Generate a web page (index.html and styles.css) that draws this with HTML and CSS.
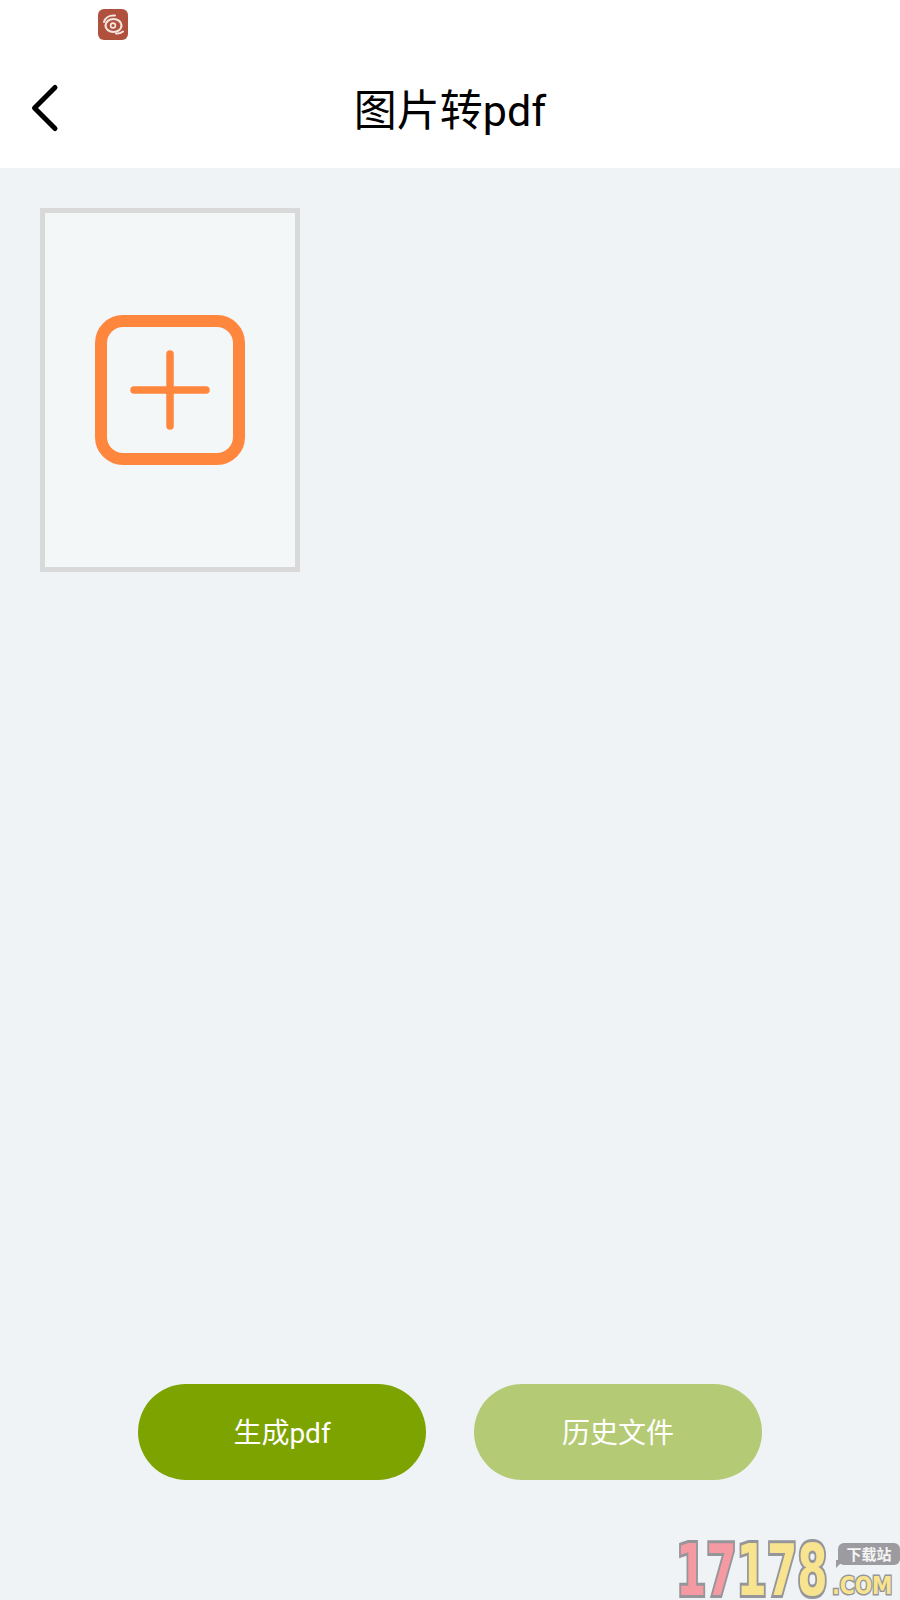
FILE: index.html
```html
<!DOCTYPE html>
<html lang="zh-CN">
<head>
  <meta charset="UTF-8">
  <meta name="viewport" content="width=device-width, initial-scale=1.0">
  <title>图片转pdf</title>
  <link rel="stylesheet" href="styles.css">
</head>
<body>
  <div class="page">
    <!-- Status bar -->
    <div class="status-bar">
      <svg class="app-icon" viewBox="0 0 30 31" width="30" height="31">
        <rect width="30" height="31" rx="6" fill="#b0513d"/>
        <ellipse cx="15.500" cy="16.500" rx="8" ry="6.500" fill="none" stroke="#f6e6e0" stroke-width="2.200"/>
        <circle cx="15" cy="16.500" r="2.400" fill="none" stroke="#f6e6e0" stroke-width="1.600"/>
        <path d="M6 13c1-4 5-7 11-6.500M18 24.500c3 .5 5-.5 7-2" fill="none" stroke="#f6e6e0" stroke-width="2" stroke-linecap="round"/>
      </svg>
    </div>

    <!-- Header -->
    <div class="header">
      <svg class="back-icon" viewBox="0 0 30 50" width="30" height="50">
        <path d="M26 4.500 5.500 25 26 45.500" fill="none" stroke="#000" stroke-width="5" stroke-linecap="round" stroke-linejoin="round"/>
      </svg>
      <h1>图片转pdf</h1>
    </div>

    <!-- Picture list -->
    <div class="content">
      <div class="add-card">
        <svg viewBox="0 0 150 150" width="150" height="150">
          <rect x="6" y="6" width="138" height="138" rx="22" fill="none" stroke="#ff863d" stroke-width="12"/>
          <path d="M39 75h72M75 39v72" fill="none" stroke="#ff863d" stroke-width="7.500" stroke-linecap="round"/>
        </svg>
      </div>
    </div>

    <!-- Buttons -->
    <div class="actions">
      <button class="btn btn-primary">生成pdf</button>
      <button class="btn btn-light">历史文件</button>
    </div>

    <!-- Watermark -->
    <div class="watermark">
      <div class="wm-digits"><span class="wm-pink">17</span><span class="wm-yellow">178</span></div>
      <div class="wm-side">
        <div class="wm-badge">下载站</div>
        <div class="wm-com">.COM</div>
      </div>
    </div>
  </div>
</body>
</html>
```

FILE: styles.css
```css
body {
  margin: 0;
  font-family: Roboto, "Noto Sans CJK SC", sans-serif;
  background: #eff3f6;
}
.page {
  position: relative;
  height: 1600px;
  overflow: hidden;
  display: flex;
  flex-direction: column;
}
.status-bar {
  height: 60px;
  padding: 9px 0 0 98px;
  box-sizing: border-box;
  background: #fff;
}
.app-icon {
  display: block;
}
.header {
  position: relative;
  height: 108px;
  background: #fff;
  display: flex;
  align-items: center;
  justify-content: center;
  padding-bottom: 6px;
  box-sizing: border-box;
}
.header h1 {
  margin: 0;
  font-size: 43px;
  font-weight: 400;
  line-height: 60px;
  color: #000;
}
.back-icon {
  position: absolute;
  left: 29px;
  top: 23px;
}
.content {
  flex: 1;
  padding: 40px;
}
.add-card {
  width: 260px;
  height: 364px;
  box-sizing: border-box;
  border: 5px solid #d9d9d9;
  background: #f4f7f8;
  display: flex;
  align-items: center;
  justify-content: center;
}
.add-card svg {
  display: block;
}
.actions {
  display: flex;
  gap: 48px;
  padding: 0 138px 120px;
}
.btn {
  width: 288px;
  height: 96px;
  border: none;
  border-radius: 48px;
  padding: 0 0 2px;
  color: #fff;
  font-family: inherit;
  font-size: 28px;
}
.btn-primary {
  background: #7da300;
}
.btn-light {
  background: #b4ca74;
}
.watermark {
  position: absolute;
  right: 0;
  bottom: 0;
  width: 224px;
  height: 60px;
  display: flex;
  gap: 8px;
  font-family: "DejaVu Sans", sans-serif;
  font-weight: 700;
}
.wm-digits {
  width: 154px;
  font-size: 72px;
  line-height: 60px;
  -webkit-text-stroke: 6px #96969a;
  paint-order: stroke fill;
  white-space: nowrap;
  transform: scaleX(0.605);
  transform-origin: left center;
}
.wm-pink {
  color: #f59aa2;
}
.wm-yellow {
  color: #f8e48f;
}
.wm-side {
  width: 62px;
  padding-top: 3px;
}
.wm-badge {
  position: relative;
  height: 22px;
  line-height: 22px;
  background: #9c9ca0;
  border-radius: 6px;
  color: #f4f4f4;
  font-family: "Noto Sans CJK SC", sans-serif;
  font-size: 15px;
  text-align: center;
}
.wm-badge::after {
  content: "";
  position: absolute;
  left: -2px;
  bottom: -3px;
  border-top: 8px solid #9c9ca0;
  border-right: 8px solid transparent;
}
.wm-com {
  margin: 7px 0 0 -6px;
  font-size: 24px;
  line-height: 28px;
  color: #f8e48f;
  -webkit-text-stroke: 3px #96969a;
  paint-order: stroke fill;
  white-space: nowrap;
  transform: scaleX(0.85);
  transform-origin: left center;
}
```
